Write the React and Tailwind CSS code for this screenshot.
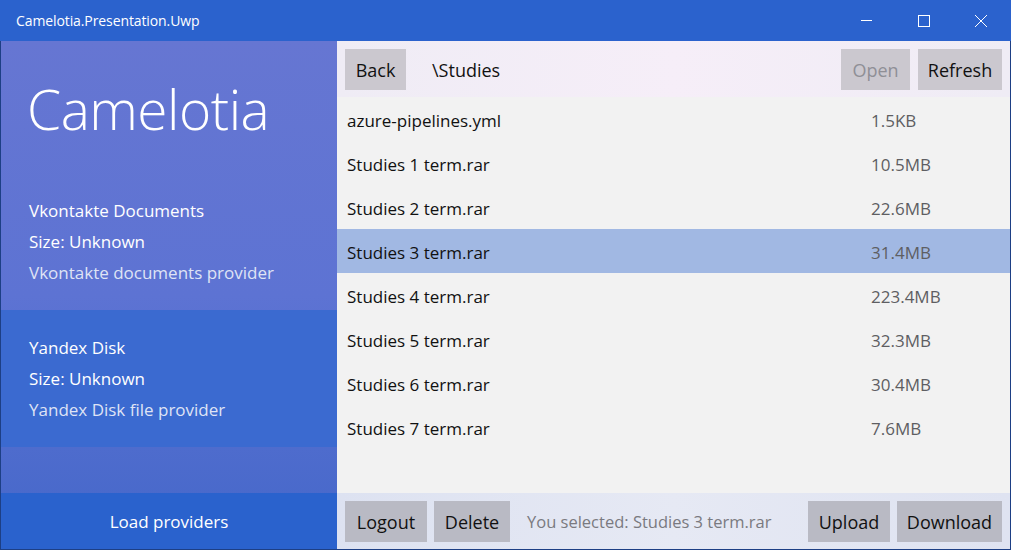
import React from 'react';

const files = [
    { name: 'azure-pipelines.yml', size: '1.5KB' },
    { name: 'Studies 1 term.rar', size: '10.5MB' },
    { name: 'Studies 2 term.rar', size: '22.6MB' },
    { name: 'Studies 3 term.rar', size: '31.4MB', selected: true },
    { name: 'Studies 4 term.rar', size: '223.4MB' },
    { name: 'Studies 5 term.rar', size: '32.3MB' },
    { name: 'Studies 6 term.rar', size: '30.4MB' },
    { name: 'Studies 7 term.rar', size: '7.6MB' },
];

const providers = [
    { name: 'Vkontakte Documents', size: 'Size: Unknown', desc: 'Vkontakte documents provider', bg: 'bg-transparent' },
    { name: 'Yandex Disk', size: 'Size: Unknown', desc: 'Yandex Disk file provider', bg: 'bg-[#3b6ad0]' },
];

const Btn = ({ children, disabled, className = '' }) => (
    <button className={`h-[41px] pt-[3px] text-[18px] ${disabled ? 'text-[#8f8f96]' : 'text-[#111]'} ${className}`}>
        {children}
    </button>
);

const App = () => {
    return (
        <div className="w-[1011px] h-[550px] flex flex-col bg-[#1d3f85] overflow-hidden" style={{ fontFamily: '"Open Sans", "Noto Sans", sans-serif' }}>
            {/* title bar */}
            <div className="h-[41px] bg-[#2b62cd] flex items-center text-white shrink-0">
                <span className="pl-[16px] text-[14px] tracking-[-0.1px] flex-1">Camelotia.Presentation.Uwp</span>
                <div className="flex h-full">
                    <div className="w-[58px] flex items-center justify-center">
                        <svg width="11" height="11" viewBox="0 0 11 11"><path d="M0 5.5H11" stroke="white" strokeWidth="1" /></svg>
                    </div>
                    <div className="w-[58px] flex items-center justify-center">
                        <svg width="12" height="12" viewBox="0 0 12 12"><rect x="0.5" y="0.5" width="11" height="11" fill="none" stroke="white" strokeWidth="1" /></svg>
                    </div>
                    <div className="w-[58px] flex items-center justify-center pr-[2px]">
                        <svg width="12" height="12" viewBox="0 0 12 12"><path d="M0 0L12 12M12 0L0 12" stroke="white" strokeWidth="1" /></svg>
                    </div>
                </div>
            </div>

            <div className="flex flex-1 min-h-0 px-px pb-px">
                {/* sidebar */}
                <div className="w-[336px] flex flex-col bg-gradient-to-b from-[#6676d2] via-[#5d73d3] to-[#4467c9] text-white">
                    <div className="h-[132px] pl-[26px] pt-[38px]">
                        <div className="text-[55px] font-light leading-[60px] tracking-[-0.5px]">Camelotia</div>
                    </div>
                    {providers.map(p => (
                        <div key={p.name} className={`${p.bg} pl-[28px] py-[22px] text-[17px] leading-[31px]`}>
                            <div>{p.name}</div>
                            <div>{p.size}</div>
                            <div className="text-[#dfe3f5]">{p.desc}</div>
                        </div>
                    ))}
                    <div className="flex-1" />
                    <div className="h-[56px] bg-[#2a62cd] flex items-center justify-center pt-[2px] text-[17px]">Load providers</div>
                </div>

                {/* content */}
                <div className="flex-1 flex flex-col bg-[#f2f2f2] min-w-0">
                    <div className="h-[56px] bg-gradient-to-r from-[#efecf5] via-[#f6eef8] to-[#efecf5] flex items-center px-[8px] gap-[8px]">
                        <Btn className="bg-[#cbc8cf] w-[61px]">Back</Btn>
                        <span className="ml-[18px] pt-[3px] text-[18px] text-[#111] flex-1">\Studies</span>
                        <Btn disabled className="bg-[#cbc8cf] w-[69px]">Open</Btn>
                        <Btn className="bg-[#cbc8cf] w-[84px]">Refresh</Btn>
                    </div>
                    <div className="flex-1 flex flex-col">
                        {files.map(f => (
                            <div key={f.name} className={`h-[44px] flex items-center pt-[3px] text-[17px] ${f.selected ? 'bg-[#a1b8e3]' : ''}`}>
                                <span className="pl-[10px] w-[534px] text-[#111]">{f.name}</span>
                                <span className="text-[#5e5e62]">{f.size}</span>
                            </div>
                        ))}
                    </div>
                    <div className="h-[56px] bg-gradient-to-r from-[#dde2f1] via-[#e6e9f4] to-[#dfe3f1] flex items-center px-[8px] gap-[7px]">
                        <Btn className="bg-[#b9bac4] w-[82px]">Logout</Btn>
                        <Btn className="bg-[#b9bac4] w-[76px]">Delete</Btn>
                        <span className="ml-[10px] pt-[2px] text-[16.5px] text-[#7a7a80] flex-1">You selected: Studies 3 term.rar</span>
                        <Btn className="bg-[#b9bac4] w-[82px]">Upload</Btn>
                        <Btn className="bg-[#b9bac4] w-[105px]">Download</Btn>
                    </div>
                </div>
            </div>
        </div>
    );
};

export default App;
